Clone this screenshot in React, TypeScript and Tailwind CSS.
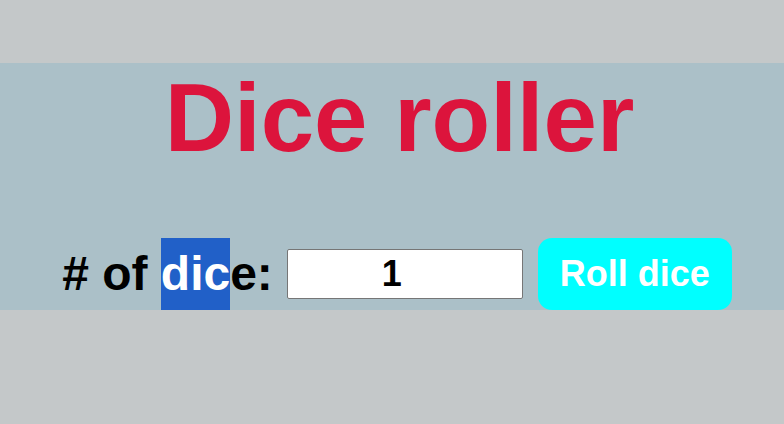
import { useState } from "react";

const App: React.FC = () => {
	const [count, setCount] = useState("1");

	return (
		<div className="min-h-[424px] w-full bg-[#c4c8c9] pt-[63px] font-['Liberation_Sans',Arial,sans-serif]">
			<section className="flex flex-col items-center bg-[#abc0c8] pl-2">
				<h1 className="pl-[7px] text-[96px] font-bold leading-[1.15] text-[#dc143c]">
					Dice roller
				</h1>

				{/* Controls */}
				<div className="mt-[65px] flex h-[72px] items-center pl-[2px]">
					<label className="text-[48px] font-bold leading-[72px] text-black">
						# of{" "}
						<span className="inline-block bg-[#2160c8] leading-[72px] text-white">
							dic
						</span>
						e:
					</label>
					<input
						type="text"
						value={count}
						onChange={(e) => setCount(e.target.value)}
						className="ml-[14px] h-[50px] w-[236px] rounded-[2px] border border-[#767676] bg-white pr-[26px] text-center text-[36px] font-bold text-black outline-none"
					/>
					<button className="ml-[15px] h-[72px] w-[194px] rounded-[14px] bg-[#00ffff] text-[36px] font-bold text-white">
						Roll dice
					</button>
				</div>
			</section>
		</div>
	);
};

export default App;
